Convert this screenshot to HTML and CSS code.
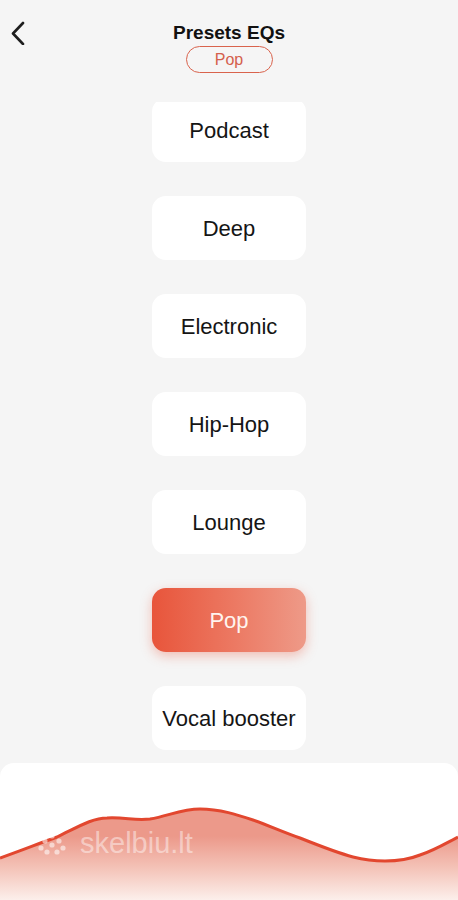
FILE: index.html
```html
<!DOCTYPE html>
<html lang="en">
<head>
<meta charset="utf-8">
<title>Presets EQs</title>
<link rel="stylesheet" href="styles.css">
</head>
<body>
<div class="screen">
  <header class="header">
    <button class="back" aria-label="Back">
      <svg width="16" height="24" viewBox="0 0 16 24"><path d="M13 2 L3 12.5 L13 23" fill="none" stroke="#1e1e1e" stroke-width="2.6" stroke-linecap="round" stroke-linejoin="round"/></svg>
    </button>
    <div class="titles">
      <h1 class="title">Presets EQs</h1>
      <span class="pill">Pop</span>
    </div>
  </header>
  <div class="list">
    <div class="items">
      <div class="card">Podcast</div>
      <div class="card">Deep</div>
      <div class="card">Electronic</div>
      <div class="card">Hip-Hop</div>
      <div class="card">Lounge</div>
      <div class="card active">Pop</div>
      <div class="card">Vocal booster</div>
    </div>
  </div>
  <div class="panel">
    <svg class="curve" width="458" height="137" viewBox="0 0 458 137">
      <defs>
        <linearGradient id="fill" x1="0" y1="0" x2="0" y2="1">
          <stop offset="0.3" stop-color="#ec998a"/>
          <stop offset="0.65" stop-color="#f4c3b8"/>
          <stop offset="1" stop-color="#fcefeb"/>
        </linearGradient>
      </defs>
      <path d="M0 95 C20 88 40 80 57 74 C78 64 92 55 107 55 C125 54 135 58 150 56 C168 53 182 46 200 46 C220 46 238 52 253 57 C270 63 285 70 300 75 C320 83 338 90 353 94 C365 97 375 98 385 98 C398 98 410 96 420 92 C435 87 448 79 458 74 L458 137 L0 137 Z" fill="url(#fill)"/>
      <path d="M0 95 C20 88 40 80 57 74 C78 64 92 55 107 55 C125 54 135 58 150 56 C168 53 182 46 200 46 C220 46 238 52 253 57 C270 63 285 70 300 75 C320 83 338 90 353 94 C365 97 375 98 385 98 C398 98 410 96 420 92 C435 87 448 79 458 74" fill="none" stroke="#e2472f" stroke-width="3"/>
    </svg>
    <div class="watermark">
      <svg class="dots" width="28" height="22" viewBox="0 0 28 22">
        <g fill="rgba(255,255,255,0.55)">
          <circle cx="14" cy="3" r="2.6"/>
          <circle cx="7" cy="8" r="2.6"/>
          <circle cx="21" cy="8" r="2.6"/>
          <circle cx="3" cy="15" r="2.6"/>
          <circle cx="14" cy="12" r="2.6"/>
          <circle cx="25" cy="15" r="2.6"/>
          <circle cx="9" cy="19" r="2.6"/>
          <circle cx="19" cy="19" r="2.6"/>
        </g>
      </svg>
      <span>skelbiu.lt</span>
    </div>
  </div>
</div>
</body>
</html>
```
FILE: styles.css
```css
* { box-sizing: border-box; }
html, body {
  margin: 0;
  padding: 0;
  background: #f5f5f5;
}
body {
  font-family: "Liberation Sans", Arial, "Noto Sans", sans-serif;
  color: #111;
}
.screen {
  width: 458px;
  height: 900px;
  display: flex;
  flex-direction: column;
  overflow: hidden;
  background: #f5f5f5;
}
.header {
  position: relative;
  height: 102px;
  display: flex;
  justify-content: center;
  padding-top: 21px;
}
.back {
  position: absolute;
  left: 9px;
  top: 20px;
  border: 0;
  background: none;
  padding: 0;
  width: 18px;
  height: 26px;
  display: flex;
  align-items: center;
  justify-content: center;
}
.titles {
  display: flex;
  flex-direction: column;
  align-items: center;
}
.title {
  margin: 0;
  font-size: 19px;
  line-height: 24px;
  font-weight: 700;
  color: #111;
}
.pill {
  margin-top: 1px;
  width: 87px;
  height: 27px;
  border: 1.5px solid #d9634d;
  border-radius: 14px;
  color: #d4604c;
  font-size: 16px;
  display: flex;
  align-items: center;
  justify-content: center;
}
.list {
  height: 661px;
  overflow: hidden;
}
.items {
  margin-top: -4px;
  display: flex;
  flex-direction: column;
  align-items: center;
  gap: 34px;
}
.card {
  width: 154px;
  height: 64px;
  border-radius: 14px;
  background: #ffffff;
  display: flex;
  align-items: center;
  justify-content: center;
  font-size: 22px;
  color: #151515;
  padding-top: 1px;
  white-space: nowrap;
}
.card.active {
  background: linear-gradient(90deg, #e8553b 0%, #ec7a64 55%, #ee9a88 100%);
  color: #fff4ef;
  box-shadow: 0 4px 12px rgba(232, 85, 59, 0.35);
}
.panel {
  position: relative;
  flex: 1;
  background: #ffffff;
  border-radius: 14px 14px 0 0;
  overflow: hidden;
}
.curve {
  display: block;
}
.watermark {
  position: absolute;
  left: 38px;
  top: 64px;
  font-size: 29px;
  color: rgba(255, 255, 255, 0.45);
  display: flex;
  align-items: center;
  gap: 14px;
}
.dots {
  display: block;
}
```
